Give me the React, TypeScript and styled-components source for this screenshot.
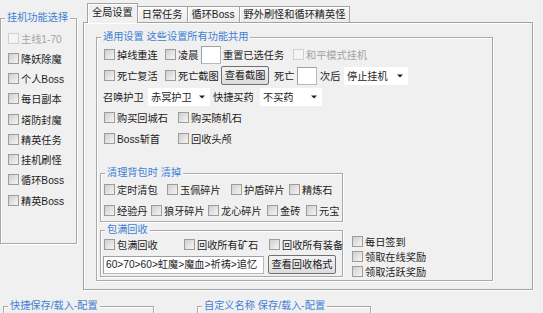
import React from 'react'
import styled, { createGlobalStyle } from 'styled-components'

const Global = createGlobalStyle`
  html, body {
    margin: 0;
    padding: 0;
    background: #f0f0f0;
  }
  body {
    font-family: "Liberation Sans", "Noto Sans CJK SC", sans-serif;
    font-size: 10.2px;
    color: #1c1c1c;
  }
  * { box-sizing: border-box; }
`

const Screen = styled.div`
  width: 543px;
  height: 313px;
  overflow: hidden;
  display: flex;
  flex-direction: column;
`

const TopRow = styled.div`
  display: flex;
  align-items: flex-start;
`

const BottomRow = styled.div`
  display: flex;
  margin-top: 16px;
`

const Group = styled.div<{ $w?: number; $h?: number; $ml?: number; $mt?: number }>`
  position: relative;
  flex: none;
  width: ${p => (p.$w ? `${p.$w}px` : 'auto')};
  height: ${p => (p.$h ? `${p.$h}px` : 'auto')};
  margin-left: ${p => p.$ml || 0}px;
  margin-top: ${p => p.$mt || 0}px;
  border: 1px solid #a9a9a9;
  box-shadow: inset 1px 1px 0 #fff, 1px 1px 0 #fff;
`

const Legend = styled.span`
  position: absolute;
  top: -7px;
  left: 4px;
  padding: 0 2px;
  line-height: 12px;
  background: #f0f0f0;
  color: #3f7fd5;
  white-space: nowrap;
`

const SideList = styled.div`
  padding: 9px 0 0 7px;
`

const Row = styled.div<{ $h?: number; $pl?: number; $mt?: number }>`
  display: flex;
  align-items: center;
  height: ${p => p.$h || 21}px;
  padding-left: ${p => p.$pl || 0}px;
  margin-top: ${p => p.$mt || 0}px;
  white-space: nowrap;
`

const CheckWrap = styled.label<{ $w?: number; $off?: boolean }>`
  display: flex;
  align-items: center;
  gap: 2px;
  flex: none;
  width: ${p => (p.$w ? `${p.$w}px` : 'auto')};
  color: ${p => (p.$off ? '#a4a4a4' : 'inherit')};
  white-space: nowrap;
`

const Box = styled.span<{ $off?: boolean }>`
  width: 11px;
  height: 11px;
  flex: none;
  border: 1px solid ${p => (p.$off ? '#d0d0d0' : '#9c9c9c')};
  background: ${p => (p.$off ? '#f5f5f5' : 'linear-gradient(135deg, #cfcfcf, #f5f5f5)')};
`

const Text = styled.span<{ $w?: number; $ml?: number }>`
  flex: none;
  width: ${p => (p.$w ? `${p.$w}px` : 'auto')};
  margin-left: ${p => p.$ml || 0}px;
`

const Field = styled.div<{ $w: number; $ml?: number }>`
  flex: none;
  width: ${p => p.$w}px;
  height: 18px;
  margin-left: ${p => p.$ml || 0}px;
  padding-left: 2px;
  line-height: 16px;
  background: #fff;
  border: 1px solid #b8b8b8;
  border-top-color: #a0a0a0;
  border-left-color: #a0a0a0;
  overflow: hidden;
`

const Button = styled.div<{ $w: number; $ml?: number }>`
  flex: none;
  width: ${p => p.$w}px;
  height: 19px;
  margin-left: ${p => p.$ml || 0}px;
  line-height: 17px;
  text-align: center;
  border: 1px solid #707070;
  border-radius: 2px;
  background: linear-gradient(#f3f3f3, #dcdcdc);
`

const Select = styled.div<{ $w: number }>`
  flex: none;
  display: flex;
  align-items: center;
  justify-content: space-between;
  width: ${p => p.$w}px;
  height: 18px;
  padding: 0 5px 0 3px;
  background: #fff;
`

const Tabs = styled.div`
  flex: none;
  width: 450px;
  margin: 3px 0 0 6px;
`

const TabStrip = styled.div`
  position: relative;
  z-index: 1;
  display: flex;
  align-items: flex-end;
  height: 19px;
  padding-left: 4px;
`

const Tab = styled.div<{ $on?: boolean }>`
  flex: none;
  height: ${p => (p.$on ? 20 : 16)}px;
  margin-bottom: ${p => (p.$on ? -1 : 0)}px;
  padding: 0 4px;
  line-height: ${p => (p.$on ? 17 : 15)}px;
  border: 1px solid #a3a3a3;
  border-bottom: none;
  background: ${p => (p.$on ? '#f0f0f0' : 'linear-gradient(#f8f8f8, #ebebeb)')};
  box-shadow: inset 1px 1px 0 #fff;
  & + & {
    margin-left: -1px;
  }
`

const TabPanel = styled.div`
  height: 268px;
  padding: 14px 0 0 12px;
  border: 1px solid #a3a3a3;
  box-shadow: inset 1px 1px 0 #fff, 1px 1px 0 #fff;
`

const MainBody = styled.div`
  padding: 6px 0 3px 3px;
`

const SubArea = styled.div`
  display: flex;
  align-items: flex-end;
  margin-top: 24px;
`

const SubCol = styled.div`
  display: flex;
  flex-direction: column;
`

const SubBody = styled.div<{ $pt: number; $pb?: number }>`
  padding: ${p => p.$pt}px 0 ${p => p.$pb || 0}px 3px;
`

const DailyCol = styled.div`
  margin: 0 0 -2px 9px;
`

type CheckProps = { label: string; w?: number; off?: boolean }

function Check({ label, w, off }: CheckProps) {
  return (
    <CheckWrap $w={w} $off={off}>
      <Box $off={off} />
      {label}
    </CheckWrap>
  )
}

function Drop({ value, w }: { value: string; w: number }) {
  return (
    <Select $w={w}>
      <span>{value}</span>
      <svg width="6" height="4" viewBox="0 0 6 4">
        <path d="M0 0.5h6L3 3.5z" fill="#222" />
      </svg>
    </Select>
  )
}

const sideItems = ['降妖除魔', '个人Boss', '每日副本', '塔防封魔', '精英任务', '挂机刷怪', '循环Boss', '精英Boss']
const tabs = ['全局设置', '日常任务', '循环Boss', '野外刷怪和循环精英怪']

export default function App() {
  return (
    <Screen>
      <Global />
      <TopRow>
        <Group $w={77} $h={226} $mt={18}>
          <Legend>挂机功能选择</Legend>
          <SideList>
            <Row $h={20.25}>
              <Check label="主线1-70" off />
            </Row>
            {sideItems.map(s => (
              <Row key={s} $h={20.25}>
                <Check label={s} />
              </Row>
            ))}
          </SideList>
        </Group>

        <Tabs>
          <TabStrip>
            {tabs.map((t, i) => (
              <Tab key={t} $on={i === 0}>{t}</Tab>
            ))}
          </TabStrip>
          <TabPanel>
            <Group $w={397}>
              <Legend>通用设置 这些设置所有功能共用</Legend>
              <MainBody>
                <Row $pl={4}>
                  <Check label="掉线重连" w={61} />
                  <Check label="凌晨" w={36} />
                  <Field $w={20} />
                  <Text $w={70} $ml={2}>重置已选任务</Text>
                  <Check label="和平模式挂机" off />
                </Row>
                <Row $pl={4}>
                  <Check label="死亡复活" w={61} />
                  <Check label="死亡截图" w={56} />
                  <Button $w={48}>查看截图</Button>
                  <Text $w={23} $ml={5}>死亡</Text>
                  <Field $w={20} />
                  <Text $w={24} $ml={3}>次后</Text>
                  <Drop value="停止挂机" w={64} />
                </Row>
                <Row $pl={4}>
                  <Text $w={45} $ml={-1}>召唤护卫</Text>
                  <Drop value="赤冥护卫" w={62} />
                  <Text $w={47} $ml={3}>快捷买药</Text>
                  <Drop value="不买药" w={62} />
                </Row>
                <Row $pl={4}>
                  <Check label="购买回城石" w={74} />
                  <Check label="购买随机石" />
                </Row>
                <Row $pl={4}>
                  <Check label="Boss斩首" w={74} />
                  <Check label="回收头颅" />
                </Row>

                <SubArea>
                  <SubCol>
                    <Group $w={243} $ml={0}>
                      <Legend>清理背包时 清掉</Legend>
                      <SubBody $pt={5}>
                        <Row>
                          <Check label="定时清包" w={63} />
                          <Check label="玉佩碎片" w={64} />
                          <Check label="护盾碎片" w={58} />
                          <Check label="精炼石" />
                        </Row>
                        <Row>
                          <Check label="经验丹" w={47} />
                          <Check label="狼牙碎片" w={57} />
                          <Check label="龙心碎片" w={59} />
                          <Check label="金砖" w={39} />
                          <Check label="元宝" />
                        </Row>
                      </SubBody>
                    </Group>
                    <Group $w={243} $mt={8}>
                      <Legend>包满回收</Legend>
                      <SubBody $pt={3} $pb={2}>
                        <Row $h={20}>
                          <Check label="包满回收" w={80} />
                          <Check label="回收所有矿石" w={85} />
                          <Check label="回收所有装备" />
                        </Row>
                        <Row $h={19} $mt={1}>
                          <Field $w={161} $ml={-1}>60&gt;70&gt;60&gt;虹魔&gt;魔血&gt;祈祷&gt;追忆</Field>
                          <Button $w={68} $ml={4}>查看回收格式</Button>
                        </Row>
                      </SubBody>
                    </Group>
                  </SubCol>
                  <DailyCol>
                    <Row $h={15}>
                      <Check label="每日签到" />
                    </Row>
                    <Row $h={15}>
                      <Check label="领取在线奖励" />
                    </Row>
                    <Row $h={15}>
                      <Check label="领取活跃奖励" />
                    </Row>
                  </DailyCol>
                </SubArea>
              </MainBody>
            </Group>
          </TabPanel>
        </Tabs>
      </TopRow>

      <BottomRow>
        <Group $w={151} $h={40} $ml={3}>
          <Legend>快捷保存/载入-配置</Legend>
        </Group>
        <Group $w={174} $h={40} $ml={43}>
          <Legend>自定义名称 保存/载入-配置</Legend>
        </Group>
      </BottomRow>
    </Screen>
  )
}
